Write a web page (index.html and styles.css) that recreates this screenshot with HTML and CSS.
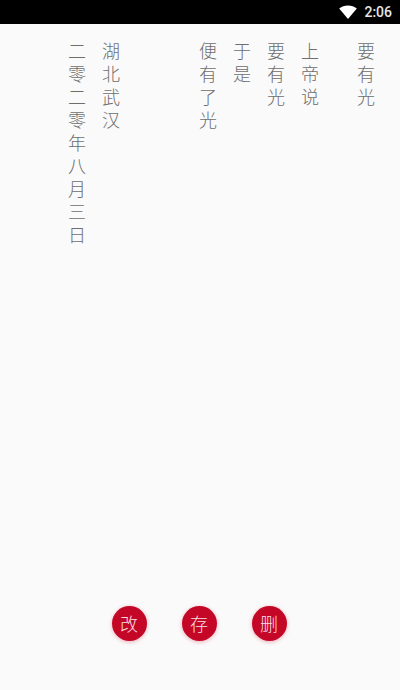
FILE: index.html
```html
<!DOCTYPE html>
<html lang="zh-CN">
<head>
    <meta charset="UTF-8">
    <meta name="viewport" content="width=device-width, initial-scale=1.0">
    <title>要有光</title>
    <link rel="stylesheet" href="styles.css">
</head>
<body>
    <div class="status-bar">
        <svg class="wifi" viewBox="0 0 18 14" width="18" height="14">
            <path d="M0.2 3.6C2.6 1.6 5.6 0.5 9 0.5s6.4 1.1 8.8 3.1L9 14z" fill="#fff"/>
        </svg>
        <span class="clock">2:06</span>
    </div>

    <div class="poem">
        <h1 class="poem-title">要有光</h1>
        <div class="poem-body">
            <p>上帝说</p>
            <p>要有光</p>
            <p>于是</p>
            <p>便有了光</p>
        </div>
        <div class="poem-meta">
            <p>湖北武汉</p>
            <p>二零二零年八月三日</p>
        </div>
    </div>

    <div class="actions">
        <button class="action-button">改</button>
        <button class="action-button">存</button>
        <button class="action-button">删</button>
    </div>
</body>
</html>
```

FILE: styles.css
```css
body {
    margin: 0;
    height: 690px;
    display: flex;
    flex-direction: column;
    overflow: hidden;
    background-color: #fafafa;
    font-family: "Noto Sans CJK SC", "Liberation Serif", serif;
}

.status-bar {
    height: 24px;
    flex-shrink: 0;
    display: flex;
    justify-content: flex-end;
    align-items: center;
    gap: 7px;
    padding-right: 8px;
    background-color: #000;
    color: #fff;
    font-family: Roboto, sans-serif;
    font-size: 14px;
}

.clock {
    font-weight: 500;
    opacity: 0.9;
}

.poem {
    flex: 1;
    min-height: 0;
    writing-mode: vertical-rl;
    padding: 18px 17px 0 0;
    color: #6e6e6e;
    font-size: 18px;
    font-weight: 300;
    letter-spacing: 5px;
    line-height: 34px;
}

.poem p,
.poem h1 {
    margin: 0;
    font: inherit;
}

.poem-body {
    margin-right: 22px;
}

.poem-meta {
    margin-right: 63px;
}

.actions {
    display: flex;
    justify-content: center;
    gap: 35px;
    padding: 0 2px 49px 0;
}

.action-button {
    width: 35px;
    height: 35px;
    padding: 0;
    border: none;
    border-radius: 50%;
    background-color: #c50727;
    box-shadow: 0 1px 4px rgba(197, 7, 39, 0.3);
    color: #f6dfe3;
    font-family: inherit;
    font-size: 18px;
    font-weight: 300;
    line-height: 35px;
}
```
